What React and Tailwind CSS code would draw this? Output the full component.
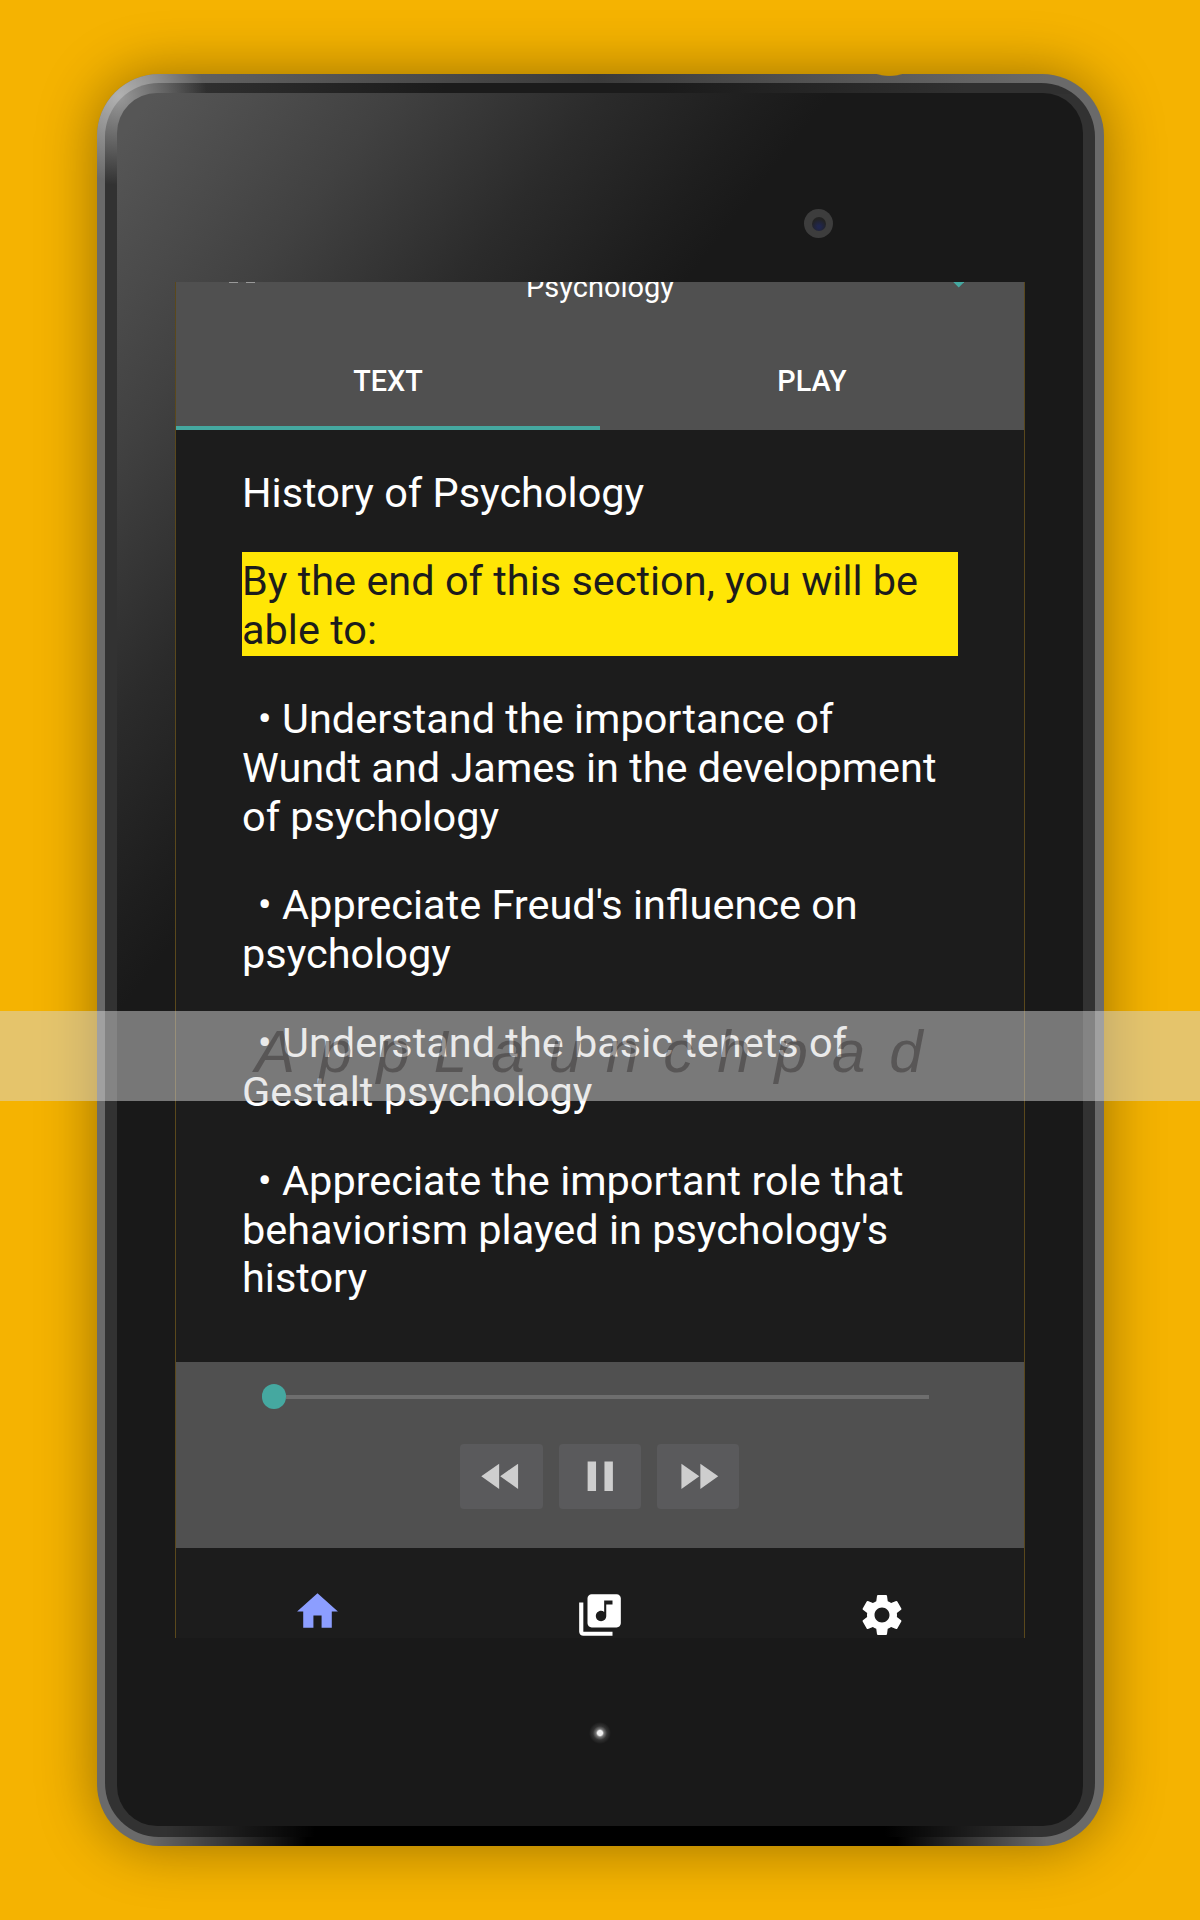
import React from "react";

const paragraphs = [
  ["Understand the importance of", "Wundt and James in the development", "of psychology"],
  ["Appreciate Freud's influence on", "psychology"],
  ["Understand the basic tenets of", "Gestalt psychology"],
  ["Appreciate the important role that", "behaviorism played in psychology's", "history"],
];

function Icon({ d, className }) {
  return (
    <svg viewBox="0 0 24 24" fill="currentColor" className={className}>
      <path d={d} />
    </svg>
  );
}

const REWIND = "M11 18V6l-8.5 6 8.5 6zm.5-6l8.5 6V6l-8.5 6z";
const PAUSE = "M6 19h4V5H6v14zm8-14v14h4V5h-4z";
const FORWARD = "M4 18l8.5-6L4 6v12zm9-12v12l8.5-6L13 6z";
const HOME = "M10 20v-6h4v6h5v-8h3L12 3 2 12h3v8z";
const LIBRARY =
  "M20 2H8c-1.100 0-2 .9-2 2v12c0 1.100.9 2 2 2h12c1.100 0 2-.9 2-2V4c0-1.100-.9-2-2-2zm-2 5h-3v5.500c0 1.380-1.120 2.500-2.500 2.500S10 13.880 10 12.500s1.120-2.500 2.500-2.500c.57 0 1.080.19 1.500.51V5h4v2zM4 6H2v14c0 1.100.9 2 2 2h14v-2H4V6z";
const GEAR =
  "M19.140 12.940c.04-.3.06-.61.06-.94 0-.32-.02-.64-.07-.94l2.030-1.580c.18-.14.23-.41.12-.61l-1.920-3.320c-.12-.22-.37-.29-.59-.22l-2.390.96c-.5-.38-1.030-.7-1.620-.94l-.36-2.540c-.04-.24-.24-.41-.48-.41h-3.840c-.24 0-.43.17-.47.41l-.36 2.540c-.59.24-1.130.57-1.620.94l-2.390-.96c-.22-.08-.47 0-.59.22L2.740 8.870c-.12.21-.08.47.12.61l2.030 1.580c-.05.3-.09.63-.09.94s.02.64.07.94l-2.030 1.580c-.18.14-.23.41-.12.61l1.920 3.320c.12.22.37.29.59.22l2.390-.96c.5.38 1.030.7 1.620.94l.36 2.540c.05.24.24.41.48.41h3.840c.24 0 .44-.17.47-.41l.36-2.540c.59-.24 1.130-.56 1.620-.94l2.390.96c.22.08.47 0 .59-.22l1.920-3.320c.12-.22.07-.47-.12-.61l-2.010-1.580zM12 15.600c-1.980 0-3.600-1.620-3.600-3.600s1.620-3.600 3.600-3.600 3.600 1.620 3.600 3.600-1.620 3.600-3.600 3.600z";

function MediaButton({ d, label }) {
  return (
    <button aria-label={label} className="flex h-[65px] w-[82.5px] items-center justify-center rounded bg-[#5a5a5c] text-[#cecece]">
      <Icon d={d} className="size-[50.5px] shrink-0" />
    </button>
  );
}

function Screen() {
  return (
    <div className="flex h-[1356px] w-[850px] flex-col overflow-hidden border-x border-[#5a481c] bg-[#1c1c1c] text-white">
      <header className="relative flex h-[148px] shrink-0 flex-col overflow-hidden bg-[#505050]">
        <div className="absolute left-[53px] top-0 flex gap-2">
          <span className="h-px w-[9px] bg-[#999]" />
          <span className="h-px w-[9px] bg-[#999]" />
        </div>
        <svg viewBox="0 0 12 6" className="absolute left-[776.5px] top-0 h-[5.500px] w-[11.500px]">
          <path d="M0 0h12L6 6z" fill="#45a8a0" />
        </svg>
        <h1 className="-mt-3 text-center text-[29px] leading-[34px]">Psychology</h1>
        <div className="mt-auto flex h-[98px] text-[28.800px] font-medium">
          <div className="flex flex-1 items-center justify-center border-b-4 border-[#45a8a0] pt-[6px]">TEXT</div>
          <div className="flex flex-1 items-center justify-center border-b-4 border-transparent pt-[6px]">PLAY</div>
        </div>
      </header>

      <main className="flex h-[932px] shrink-0 flex-col px-[66px] pt-[39.300px] text-[41.460px] leading-[48.850px]">
        <h2 className="whitespace-nowrap">History of Psychology</h2>
        <p className="mt-[33.500px] whitespace-nowrap bg-[#ffe605] pb-[1.300px] pt-[5.700px] text-[#1c1c1c]">
          By the end of this section, you will be
          <br />
          able to:
        </p>
        <div className="mt-[38.500px] flex flex-col gap-[40px]">
          {paragraphs.map((lines) => (
            <p key={lines[0]} className="whitespace-nowrap">
              <span className="inline-block w-[15.800px]" />
              {"• "}
              {lines.map((line, i) => (
                <React.Fragment key={line}>
                  {i > 0 && <br />}
                  {line}
                </React.Fragment>
              ))}
            </p>
          ))}
        </div>
      </main>

      <section className="flex h-[186px] shrink-0 flex-col items-center bg-[#505050]">
        <div className="mt-[22px] flex w-full items-center pl-[85.500px] pr-[95px]">
          <div className="h-[25px] w-[24.500px] rounded-full bg-[#45a8a0]" />
          <div className="h-1 flex-1 bg-[#6e6e6e]" />
        </div>
        <div className="mr-[0.500px] mt-[34.700px] flex gap-[15.800px]">
          <MediaButton d={REWIND} label="Rewind" />
          <MediaButton d={PAUSE} label="Pause" />
          <MediaButton d={FORWARD} label="Fast forward" />
        </div>
      </section>

      <nav className="grid h-[90px] shrink-0 grid-cols-3 justify-items-center">
        <Icon d={HOME} className="mt-[39px] size-[49px] text-[#8c9eff]" />
        <Icon d={LIBRARY} className="mt-[42px] size-[50px]" />
        <Icon d={GEAR} className="mr-px mt-[42px] size-[50px]" />
      </nav>
    </div>
  );
}

export default function App() {
  return (
    <div className="relative flex h-[1920px] w-[1200px] justify-center overflow-hidden bg-[#f5b301] pt-[74px] font-['Roboto',sans-serif]">
      <div className="relative h-[1772px] w-[1007px] rounded-[62px] bg-[#6a6a6a] bg-[linear-gradient(90deg,transparent_50px,#000_210px,#000_800px,transparent_950px),linear-gradient(90deg,transparent_50px,#626262_80px,#3a3a3a_500px,#626262_860px,#6a6a6a_950px)] bg-[length:100%_9px,100%_9px] bg-[position:0_100%,0_0] bg-no-repeat px-[8.500px] pb-[9px] pt-[9px] shadow-[0_0_58px_rgba(0,0,0,0.380)]">
        <div className="pointer-events-none absolute inset-0 rounded-[62px] bg-[radial-gradient(circle_at_22px_22px,rgba(185,185,185,0.900),transparent_85px)]" />
        <div className="relative h-full w-full rounded-[54px] bg-[#323232] bg-[radial-gradient(circle_at_14px_14px,#999,transparent_88px),linear-gradient(90deg,transparent_60px,#000_210px,#000_780px,transparent_930px),linear-gradient(90deg,transparent_60px,#1b1b1b_340px,#1b1b1b_560px,#303030_860px)] bg-[length:100%_100%,100%_11px,100%_11px] bg-[position:0_0,0_100%,0_0] bg-no-repeat px-[12px] pb-[11px] pt-[10px]">
          <div className="flex h-full w-full flex-col items-center rounded-[40px] bg-[linear-gradient(127.800deg,#565656_30px,#414141_220px,#2b2b2b_385px,#1e1e1e_510px,#191919_565px)]">
            <div className="flex h-[189px] w-full shrink-0 justify-end pr-[250px] pt-[116px]">
              <div className="flex size-[29px] items-center justify-center rounded-full bg-[#3d3d3d]">
                <div className="size-[14px] rounded-full bg-[radial-gradient(circle_at_50%_70%,#20264f_10%,#232323_65%)]" />
              </div>
            </div>
            <Screen />
            <div className="mt-[84px] size-[22px] rounded-full bg-[radial-gradient(circle,#eee_2.500px,#777_4px,#333_7px,transparent_11px)]" />
          </div>
        </div>
        <div className="absolute left-[780px] top-0 h-[2px] w-[25px] bg-[radial-gradient(ellipse_at_top,#c79100_50%,transparent_75%)]" />
      </div>

      <div className="absolute left-0 top-[1011px] h-[90px] w-full overflow-hidden whitespace-nowrap bg-[rgba(213,213,213,0.500)] pl-[255px] font-['Liberation_Sans',sans-serif] text-[60px] italic leading-[81px] tracking-[24px] text-[rgba(49,45,45,0.450)]">
        AppLaunchpad
      </div>
    </div>
  );
}
